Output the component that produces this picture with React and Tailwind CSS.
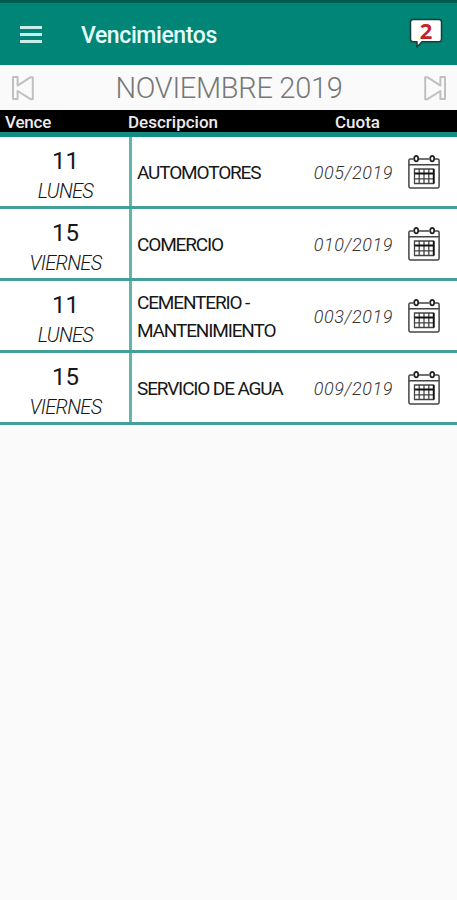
const vencimientos = [
  { dia: "11", nombre: "LUNES", descripcion: ["AUTOMOTORES"], cuota: "005/2019" },
  { dia: "15", nombre: "VIERNES", descripcion: ["COMERCIO"], cuota: "010/2019" },
  {
    dia: "11",
    nombre: "LUNES",
    descripcion: ["CEMENTERIO -", "MANTENIMIENTO"],
    cuota: "003/2019",
  },
  { dia: "15", nombre: "VIERNES", descripcion: ["SERVICIO DE AGUA"], cuota: "009/2019" },
];

const SkipIcon = ({ className }) => (
  <svg
    className={className}
    width="24"
    height="26"
    viewBox="0 0 24 26"
    fill="none"
    stroke="#c0c0c0"
    strokeWidth="2"
    strokeLinejoin="round"
    aria-hidden="true"
  >
    <path d="M2 2H6.6V10.6L19.6 2.2H21.8V24.2H19.6L6.6 16V24H2Z" />
  </svg>
);

const CalendarIcon = () => (
  <svg width="32" height="36" viewBox="0 0 32 36" fill="none" stroke="#444" aria-hidden="true">
    <path
      d="M5.5 5H2.3Q.9 5 .9 6.4V32.6Q.9 34 2.3 34H29.7Q31.1 34 31.1 32.6V6.4Q31.1 5 29.7 5H26.5M11 5H21M1 10.8H31"
      strokeWidth="1.5"
    />
    <ellipse cx="8.2" cy="4.6" rx="2" ry="2.8" stroke="#222" strokeWidth="1.8" />
    <ellipse cx="24.2" cy="4.6" rx="2" ry="2.8" stroke="#222" strokeWidth="1.8" />
    <path d="M6.5 15H25.5V29.5H6.5ZM11.2 15V29.5M16 15V29.5M20.8 15V29.5M6.5 24.8H25.5" strokeWidth="1.3" />
    <path d="M6.5 19.5H25.5M25.8 15V29.5" stroke="#111" strokeWidth="1.8" />
  </svg>
);

const MessageBadge = () => (
  <div className="relative h-[32px] w-[34px]">
    <svg width="34" height="32" viewBox="0 0 34 32" aria-hidden="true">
      <path
        d="M4 1.5H30Q32.5 1.5 32.5 4V21Q32.5 23.8 30 23.8H13L8 29V23.8H4Q1.5 23.8 1.5 21V4Q1.5 1.5 4 1.5Z"
        fill="#fff"
        stroke="#163f3c"
        strokeWidth="1.5"
        strokeLinejoin="round"
      />
    </svg>
    <span className="absolute inset-x-0 -top-px text-center font-['Open_Sans'] text-[22px] leading-[26px] font-bold text-[#c51f2b]">
      2
    </span>
  </div>
);

const Row = ({ item }) => (
  <div className="flex h-[72px] border-b-[3px] border-[#43a099] bg-white">
    <div className="flex w-[132px] flex-col items-center border-r-[3px] border-[#62b5ad] pt-[9px] pl-[2px] text-[#171717]">
      <span className="text-[24px] leading-[30px]">{item.dia}</span>
      <span className="text-[20px] leading-[30px] font-light tracking-[-0.7px] italic">
        {item.nombre}
      </span>
    </div>
    <div className="flex flex-1 flex-col justify-center pt-[2px] pl-[5px] text-[19px] leading-[28px] tracking-[-1.15px] whitespace-nowrap text-[#171717]">
      {item.descripcion.map((linea) => (
        <span key={linea}>{linea}</span>
      ))}
    </div>
    <div className="flex w-[94px] items-center justify-end pt-[2px] pr-[14px] text-[18px] font-light tracking-[0.55px] whitespace-nowrap text-[#333] italic">
      {item.cuota}
    </div>
    <div className="flex w-[50px] items-center pl-px">
      <CalendarIcon />
    </div>
  </div>
);

const App = () => {
  return (
    <div className="flex h-[900px] w-[457px] flex-col overflow-hidden bg-[#fafafa] font-['Roboto',sans-serif]">
      <header className="flex h-[65px] shrink-0 items-center border-t-[3px] border-[#005c50] bg-[#008577] pr-[14px] pl-[20px]">
        <div className="flex w-[61px] flex-col gap-[4px]">
          <span className="h-[3px] w-[22px] bg-[#c9eee9]" />
          <span className="h-[3px] w-[22px] bg-[#c9eee9]" />
          <span className="h-[3px] w-[22px] bg-[#c9eee9]" />
        </div>
        <h1 className="flex-1 pt-[5px] text-[23px] font-medium tracking-[-0.4px] text-[#e6fffc]">
          Vencimientos
        </h1>
        <MessageBadge />
      </header>

      {/* Month selector */}
      <div className="flex h-[45px] shrink-0 items-center justify-between pr-[10px] pl-[11px]">
        <SkipIcon />
        <span className="pt-[2px] text-[29px] font-light tracking-[-0.3px] text-[#777]">
          NOVIEMBRE 2019
        </span>
        <SkipIcon className="-scale-x-100" />
      </div>

      <div className="flex h-[27px] shrink-0 items-center border-b-[5px] border-[#108c82] bg-black pt-[3px] pl-[5px] text-[17px] font-medium text-[#ececec]">
        <span className="w-[123px] tracking-[-0.2px]">Vence</span>
        <span className="w-[207px]">Descripcion</span>
        <span>Cuota</span>
      </div>

      <div>
        {vencimientos.map((item) => (
          <Row key={item.cuota} item={item} />
        ))}
      </div>
    </div>
  );
};

export default App;
